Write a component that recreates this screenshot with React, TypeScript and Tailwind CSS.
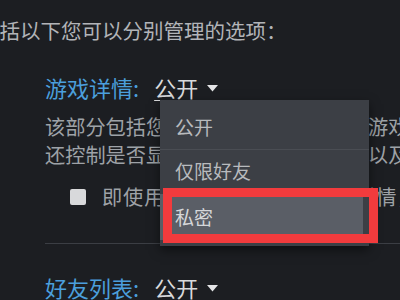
import React from 'react';

function Caret() {
    return (
        <svg width="11" height="7" viewBox="0 0 11 7" className="ml-[9px] mt-[2px] shrink-0">
            <path d="M0 0 L11 0 L5.5 6.5 Z" fill="#e4e5e7" />
        </svg>
    );
}

function SettingHeading({ label, value }: { label: string; value: string }) {
    return (
        <div className="flex items-center h-[30px] text-[22px] leading-[30px] whitespace-nowrap">
            <span className="text-[#4b9fdc]">{label}:</span>
            <span className="ml-[15px] text-[#d9dadc] underline underline-offset-[3px] decoration-1">{value}</span>
            <Caret />
        </div>
    );
}

export default function App() {
    return (
        <div
            className="relative w-[400px] h-[300px] overflow-hidden bg-[#1c1e22]"
            style={{ fontFamily: '"Noto Sans CJK SC", "Noto Sans", sans-serif' }}
        >
            <div className="pt-[16px] ml-[-21px] h-[44px] text-[20.5px] leading-[28px] text-[#b2b4b8] whitespace-nowrap">
                包括以下您可以分别管理的选项：
            </div>

            <div className="ml-[45px] mt-[28px]">
                <SettingHeading label="游戏详情" value="公开" />
                <div className="mt-[11px] text-[20.2px] leading-[28px] text-[#9ea2a7] whitespace-nowrap">
                    <p>该部分包括您拥有或愿望单中的所有游戏以及成就</p>
                    <p>还控制是否显示您正在游玩的游戏，以及游戏名称</p>
                </div>
                <div className="mt-[14px] flex items-center h-[28px] whitespace-nowrap">
                    <span className="ml-[25px] w-[16px] h-[16px] shrink-0 rounded-[2px] bg-[#d8d9db]" />
                    <span className="ml-[16px] text-[20.2px] leading-[28px] tracking-[0.9px] text-[#9ea2a7]">即使用户可以查看我的游戏详情，</span>
                </div>
                <div className="mt-[32px] h-px bg-[#3b3e44]" />
                <div className="mt-[28px]">
                    <SettingHeading label="好友列表" value="公开" />
                </div>
            </div>

            <div className="absolute left-[160px] top-[100px] w-[209px] h-[146px] bg-[#3c3f45] shadow-[0_4px_10px_rgba(0,0,0,0.5)] text-[19px] text-[#b8babd] whitespace-nowrap">
                <div className="h-[50px] pt-[6px] pl-[15px] flex items-center border-b border-[#4a4d53]">公开</div>
                <div className="h-[43px] pl-[15px] flex items-center">仅限好友</div>
                <div className="h-[46px] mt-[1px] w-[203px] pl-[15px] flex items-center bg-[#5a5e66] text-[#d4d6d9]">私密</div>
            </div>

            <div className="absolute left-[163px] top-[188px] w-[215px] h-[55px] border-[9px] border-[#f23b3d]" />
        </div>
    );
}
